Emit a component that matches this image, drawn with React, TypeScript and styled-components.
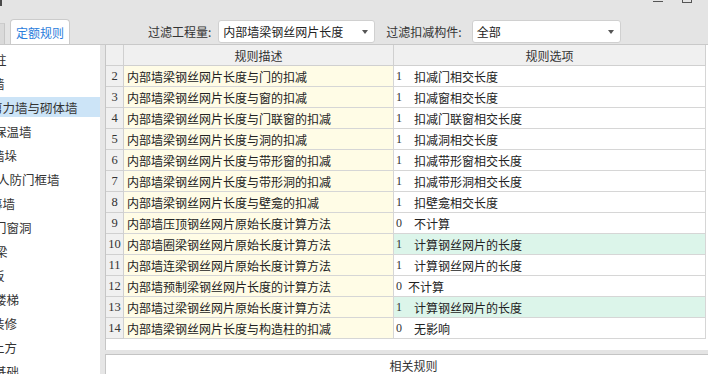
import React from 'react'
import styled, { createGlobalStyle } from 'styled-components'

const GlobalStyle = createGlobalStyle`
  html, body {
    margin: 0;
    padding: 0;
    background: #ffffff;
  }
  body {
    font-family: "Noto Sans CJK SC", "Noto Sans", sans-serif;
    color: #333333;
  }
`

const Frame = styled.div`
  width: 708px;
  height: 374px;
  display: flex;
  flex-direction: column;
  overflow: hidden;
  background: #e6e6e6;
`

const TopBar = styled.div`
  height: 45px;
  box-sizing: border-box;
  border-bottom: 1px solid #c9c9c9;
  display: flex;
  flex-direction: column;
  background: #e4e4e4;
`

const TitleStrip = styled.div`
  height: 6px;
  display: flex;
  justify-content: space-between;
  align-items: flex-start;
  overflow: hidden;
`

const CornerMark = styled.div`
  width: 2px;
  height: 6px;
  background: #4a4a4a;
`

const WindowButtons = styled.div`
  display: flex;
  align-items: flex-start;
  gap: 19px;
  margin-right: 16px;
`

const MinLine = styled.div`
  width: 10px;
  height: 1px;
  margin-top: 1px;
  background: #555555;
`

const MaxBox = styled.div`
  width: 10px;
  height: 3px;
  box-sizing: border-box;
  border: 1px solid #555555;
  border-top: none;
`

const ToolRow = styled.div`
  flex: 1;
  display: flex;
  align-items: flex-end;
`

const PrevTab = styled.div`
  width: 5px;
  height: 21px;
  box-sizing: border-box;
  background: #dadada;
  border-top: 1px solid #cccccc;
  border-right: 1px solid #c6c6c6;
`

const Tab = styled.div`
  margin-left: 5px;
  width: 60px;
  height: 25px;
  box-sizing: border-box;
  background: #ffffff;
  border: 1px solid #cbcbcb;
  border-bottom: none;
  border-radius: 4px 4px 0 0;
  display: flex;
  align-items: center;
  justify-content: center;
  font-size: 12px;
  color: #2a7ddc;
`

const FilterGroup = styled.div`
  margin-left: 78px;
  margin-bottom: 1px;
  height: 23px;
  display: flex;
  align-items: center;
`

const FilterLabel = styled.span`
  font-size: 12px;
  color: #333333;
  white-space: nowrap;
`

const Select = styled.div<{ $width: number; $gap: number }>`
  width: ${p => p.$width}px;
  height: 23px;
  margin-left: ${p => p.$gap}px;
  margin-right: 11px;
  box-sizing: border-box;
  background: #ffffff;
  border: 1px solid #d0d0d0;
  border-radius: 3px;
  padding: 0 6px 0 4px;
  display: flex;
  align-items: center;
  justify-content: space-between;
  font-size: 12px;
  color: #222222;
`

const Caret = styled.span`
  width: 0;
  height: 0;
  border-left: 3px solid transparent;
  border-right: 3px solid transparent;
  border-top: 4px solid #555555;
`

const Body = styled.div`
  flex: 1;
  display: flex;
  gap: 5px;
  min-height: 0;
`

const LeftPanel = styled.div`
  width: 100px;
  background: #ffffff;
  overflow: hidden;
`

const TreeItem = styled.div<{ $selected?: boolean }>`
  height: 20px;
  margin-top: 4px;
  display: flex;
  align-items: center;
  background: ${p => (p.$selected ? '#cce4f7' : 'transparent')};
  white-space: nowrap;
`

const TreeLabel = styled.span<{ $shift: number }>`
  margin-left: ${p => p.$shift}px;
  font-size: 12.5px;
  color: #333333;
`

const RightArea = styled.div`
  flex: 1;
  display: flex;
  flex-direction: column;
  min-width: 0;
`

const TableBox = styled.div`
  height: 307px;
  background: #ffffff;
  border-left: 1px solid #c6c6c6;
  overflow: hidden;
`

const Grid = styled.div`
  display: grid;
  grid-template-columns: 18px 270px 312px;
  grid-auto-rows: 21px;
`

const Cell = styled.div`
  box-sizing: border-box;
  border-right: 1px solid #d6d6d6;
  border-bottom: 1px solid #d6d6d6;
  display: flex;
  align-items: center;
  font-size: 12px;
  white-space: nowrap;
  overflow: hidden;
`

const HeadCell = styled(Cell)`
  justify-content: center;
  background: #f0f0f0;
  color: #333333;
  border-color: #d0d0d0;
`

const NumCell = styled(Cell)`
  justify-content: center;
  background: #f0f0f0;
  border-color: #d0d0d0;
  font-family: "Liberation Serif", serif;
  font-size: 12.5px;
  color: #333333;
`

const DescCell = styled(Cell)`
  padding-left: 3px;
  background: #fffce6;
  color: #222222;
`

const OptionCell = styled(Cell)<{ $green?: boolean }>`
  padding-left: 2px;
  background: ${p => (p.$green ? '#dcf5ea' : '#ffffff')};
  color: #222222;
`

const OptionValue = styled.span<{ $compact?: boolean }>`
  width: ${p => (p.$compact ? 12 : 18)}px;
  font-family: "Liberation Serif", serif;
  font-size: 12px;
  color: #333333;
`

const Splitter = styled.div`
  height: 4px;
  background: #e4e4e4;
  border-bottom: 1px solid #c4c4c4;
`

const BottomPanel = styled.div`
  flex: 1;
  background: #ffffff;
  border-left: 1px solid #c6c6c6;
  padding: 2px 0 0 13px;
  text-align: center;
  font-size: 12px;
  color: #333333;
`

interface ITreeItem {
  label: string
  shift: number
  selected?: boolean
}

interface IRule {
  no: number
  desc: string
  value: number
  option: string
  green?: boolean
  compact?: boolean
}

const treeItems: ITreeItem[] = [
  { label: '柱', shift: -6 },
  { label: '墙', shift: -8 },
  { label: '剪力墙与砌体墙', shift: -10, selected: true },
  { label: '保温墙', shift: -6 },
  { label: '墙垛', shift: -8 },
  { label: '人防门框墙', shift: -3 },
  { label: '幕墙', shift: -10 },
  { label: '门窗洞', shift: -6 },
  { label: '梁', shift: -5 },
  { label: '板', shift: -8 },
  { label: '楼梯', shift: -6 },
  { label: '装修', shift: -8 },
  { label: '土方', shift: -8 },
  { label: '基础', shift: -6 },
]

const rules: IRule[] = [
  { no: 2, desc: '内部墙梁钢丝网片长度与门的扣减', value: 1, option: '扣减门相交长度' },
  { no: 3, desc: '内部墙梁钢丝网片长度与窗的扣减', value: 1, option: '扣减窗相交长度' },
  { no: 4, desc: '内部墙梁钢丝网片长度与门联窗的扣减', value: 1, option: '扣减门联窗相交长度' },
  { no: 5, desc: '内部墙梁钢丝网片长度与洞的扣减', value: 1, option: '扣减洞相交长度' },
  { no: 6, desc: '内部墙梁钢丝网片长度与带形窗的扣减', value: 1, option: '扣减带形窗相交长度' },
  { no: 7, desc: '内部墙梁钢丝网片长度与带形洞的扣减', value: 1, option: '扣减带形洞相交长度' },
  { no: 8, desc: '内部墙梁钢丝网片长度与壁龛的扣减', value: 1, option: '扣壁龛相交长度' },
  { no: 9, desc: '内部墙压顶钢丝网片原始长度计算方法', value: 0, option: '不计算' },
  { no: 10, desc: '内部墙圈梁钢丝网片原始长度计算方法', value: 1, option: '计算钢丝网片的长度', green: true },
  { no: 11, desc: '内部墙连梁钢丝网片原始长度计算方法', value: 1, option: '计算钢丝网片的长度' },
  { no: 12, desc: '内部墙预制梁钢丝网片长度的计算方法', value: 0, option: '不计算', compact: true },
  { no: 13, desc: '内部墙过梁钢丝网片原始长度计算方法', value: 1, option: '计算钢丝网片的长度', green: true },
  { no: 14, desc: '内部墙梁钢丝网片长度与构造柱的扣减', value: 0, option: '无影响' },
]

const App: React.FC = () => {
  return (
    <>
      <GlobalStyle />
      <Frame>
        <TopBar>
          <TitleStrip>
            <CornerMark />
            <WindowButtons>
              <MinLine />
              <MaxBox />
            </WindowButtons>
          </TitleStrip>
          <ToolRow>
            <PrevTab />
            <Tab>定额规则</Tab>
            <FilterGroup>
              <FilterLabel>过滤工程量:</FilterLabel>
              <Select $width={157} $gap={7}>
                <span>内部墙梁钢丝网片长度</span>
                <Caret />
              </Select>
              <FilterLabel>过滤扣减构件:</FilterLabel>
              <Select $width={149} $gap={10}>
                <span>全部</span>
                <Caret />
              </Select>
            </FilterGroup>
          </ToolRow>
        </TopBar>
        <Body>
          <LeftPanel>
            {treeItems.map(item => (
              <TreeItem key={item.label} $selected={item.selected}>
                <TreeLabel $shift={item.shift}>{item.label}</TreeLabel>
              </TreeItem>
            ))}
          </LeftPanel>
          <RightArea>
            <TableBox>
              <Grid>
                <HeadCell />
                <HeadCell>规则描述</HeadCell>
                <HeadCell>规则选项</HeadCell>
                {rules.map(rule => (
                  <React.Fragment key={rule.no}>
                    <NumCell>{rule.no}</NumCell>
                    <DescCell>{rule.desc}</DescCell>
                    <OptionCell $green={rule.green}>
                      <OptionValue $compact={rule.compact}>{rule.value}</OptionValue>
                      <span>{rule.option}</span>
                    </OptionCell>
                  </React.Fragment>
                ))}
              </Grid>
            </TableBox>
            <Splitter />
            <BottomPanel>相关规则</BottomPanel>
          </RightArea>
        </Body>
      </Frame>
    </>
  )
}

export default App
